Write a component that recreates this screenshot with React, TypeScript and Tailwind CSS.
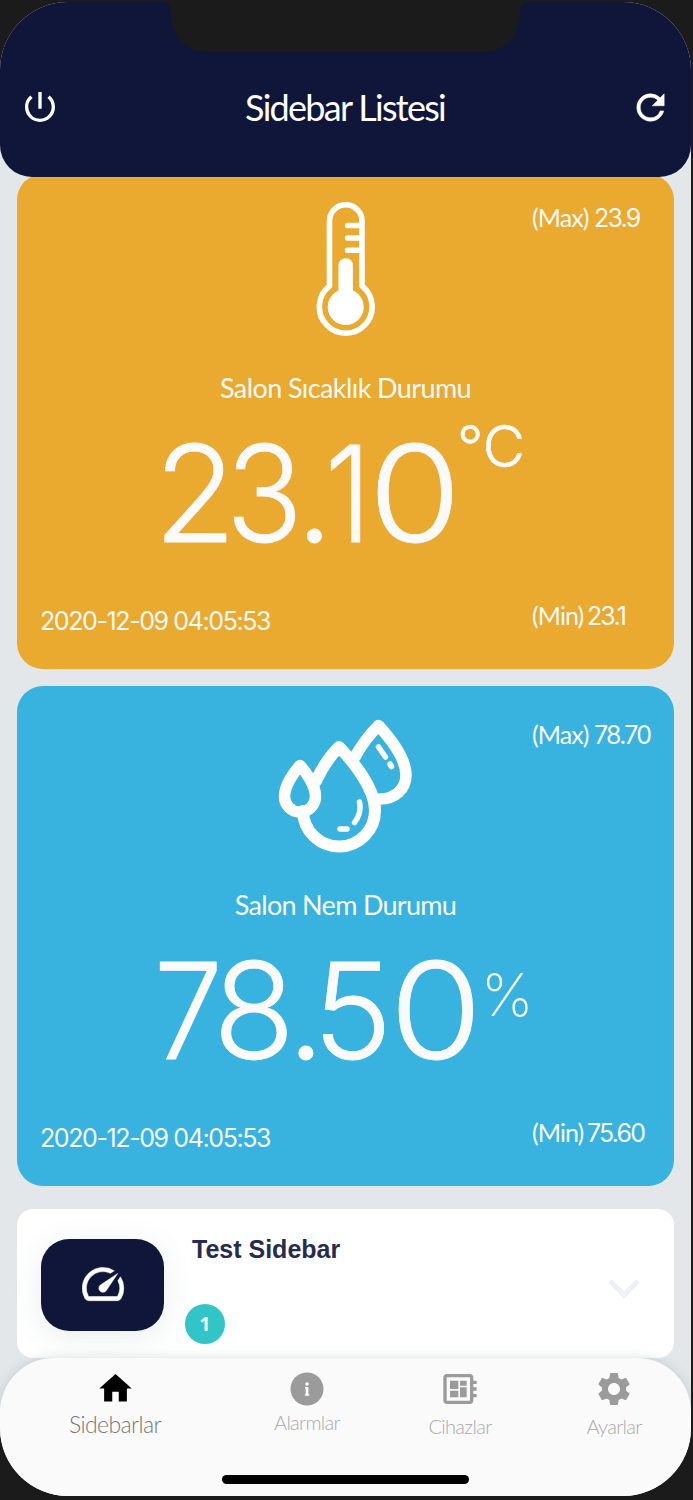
import type { ReactNode } from "react";
import { MdDeveloperBoard, MdHome, MdPowerSettingsNew, MdSettings } from "react-icons/md";

function Thermometer() {
  return (
    <svg width="60" height="136" viewBox="0 0 60 136" fill="none" stroke="#fff" strokeLinecap="round">
      <path d="M13.500 84V19a16.200 16.200 0 0 1 32.500 0V84A26.400 26.400 0 1 1 13.500 84Z" strokeWidth="5.600" strokeLinejoin="round" />
      <path d="M31.500 23.500H44M31.500 36H44M31.500 48.300H44" strokeWidth="5.400" />
      <path d="M29.700 63.500V104" strokeWidth="14.500" />
      <circle cx="29.700" cy="105" r="18" fill="#fff" stroke="none" />
    </svg>
  );
}

function Drops() {
  return (
    <svg width="136" height="134" viewBox="0 0 136 134" fill="none" stroke="#fff" strokeLinecap="round" strokeLinejoin="round">
      <path d="M77 38C84 25 92 15 100.500 6.500C111 18 128 39 128 56C128 70 117 80 102 80" strokeWidth="11.500" />
      <path d="M38 62C44 49 52 37 61 28C74 41 97 69 97 91A36 36 0 0 1 25 92" strokeWidth="12" />
      <path d="M22 46.500C15 54 6.500 67 6.500 77.500A15.500 15.500 0 0 0 37.500 77.500C37.500 67 29 54 22 46.500Z" strokeWidth="11.500" />
      <path d="M81.500 83C83 91 81 98 76.500 103.500M62 110H69M100.500 28L107.500 38M112 45L113.500 47.500" strokeWidth="5.500" />
    </svg>
  );
}

function Refresh() {
  return (
    <svg width="41" height="41" viewBox="0 0 24 24" fill="currentColor" stroke="currentColor" strokeWidth="0.3">
      <path d="M17.650 6.350A7.958 7.958 0 0 0 12 4c-4.420 0-7.990 3.580-7.990 8s3.570 8 7.990 8c3.730 0 6.840-2.550 7.730-6h-2.080A5.990 5.990 0 0 1 12 18c-3.310 0-6-2.690-6-6s2.690-6 6-6c1.660 0 3.140.690 4.220 1.780L13 11h7V4l-2.350 2.350z" />
    </svg>
  );
}

function Gauge() {
  return (
    <svg width="50" height="50" viewBox="0 0 24 24" fill="currentColor" stroke="currentColor" strokeWidth="0.25">
      <path d="m20.380 8.570-1.230 1.850a8 8 0 0 1-.220 7.580H5.070A8 8 0 0 1 15.580 6.850l1.850-1.230A10 10 0 0 0 3.350 19a2 2 0 0 0 1.720 1h13.850a2 2 0 0 0 1.740-1 10 10 0 0 0-.270-10.440zm-9.790 6.840a2 2 0 0 0 2.830 0l5.660-8.490-8.490 5.660a2 2 0 0 0 0 2.830z" />
    </svg>
  );
}

function InfoCircle() {
  return (
    <svg width="40" height="40" viewBox="0 0 40 40">
      <circle cx="20" cy="20" r="16.500" fill="#9b9b9b" />
      <path d="M18 18H21.400V25.400H22.200V26.800H17.800V25.400H18.700V19.600H18Z" fill="#fff" />
      <circle cx="20" cy="15" r="1.800" fill="#fff" />
    </svg>
  );
}

function Reading({ children }: { children: ReactNode }) {
  return (
    <span className="font-['Inter',sans-serif] tracking-[-1.8px]">{children}</span>
  );
}

type CardProps = {
  className: string;
  icon: ReactNode;
  title: ReactNode;
  value: ReactNode;
  unit: ReactNode;
  max: ReactNode;
  min: ReactNode;
};

function SensorCard({ className, icon, title, value, unit, max, min }: CardProps) {
  return (
    <section className={`flex shrink-0 flex-col justify-end rounded-[26px] pb-8 text-[#fafafa] ${className}`}>
      <div className="grid h-[200px] shrink-0 grid-cols-[142px_373px_142px] whitespace-nowrap">
        <div className="col-start-2 flex justify-center pt-[33px]">{icon}</div>
        <p className="pt-[32px] text-[25px] leading-8 tracking-[-0.9px]">{max}</p>
      </div>
      <h2 className="shrink-0 text-center text-[27px] leading-[38px]">{title}</h2>
      <div className="flex h-[182px] shrink-0 items-start whitespace-nowrap pt-[20px] font-['Inter',sans-serif] font-light leading-[132px]">
        {value}
        {unit}
      </div>
      <div className="flex h-12 shrink-0 justify-between whitespace-nowrap text-[25px] leading-8">
        <p className="pl-[23px] pt-[16px] font-['Inter',sans-serif] tracking-[-1.4px]">2020-12-09 04:05:53</p>
        <p className="w-[142px] pt-[10px] tracking-[-0.9px]">{min}</p>
      </div>
    </section>
  );
}

function Tab({ icon, label, className }: { icon: ReactNode; label: string; className: string }) {
  return (
    <button className={`flex flex-col items-center whitespace-nowrap font-light ${className}`}>
      {icon}
      <span>{label}</span>
    </button>
  );
}

export default function App() {
  return (
    <div className="h-[1500px] w-[693px] bg-[#1b1b1b] pt-[2px] font-['Lato',sans-serif]">
      <main className="flex h-[1494px] w-[691px] flex-col overflow-hidden rounded-[68px] bg-[#e3e7ea]">
        <header className="relative z-10 flex h-[175px] shrink-0 flex-col rounded-b-[32px] bg-[#10163a] text-white">
          <svg className="mx-auto block shrink-0" width="365" height="50" viewBox="0 0 365 50">
            <path d="M0 0Q8 0 8 13C9 34 22 50 46 50H319C343 50 356 34 357 13Q357 0 365 0Z" fill="#1b1b1b" />
          </svg>
          <div className="flex h-[110px] items-center justify-between pl-[20px] pr-[20px]">
            <MdPowerSettingsNew size={40} />
            <h1 className="text-[36px] font-normal tracking-[-1.7px]">Sidebar Listesi</h1>
            <Refresh />
          </div>
        </header>

        <div className="-mt-[3px] flex flex-1 flex-col gap-[17px] px-[17px]">
          <SensorCard
            className="h-[495px] bg-[#eaa92f]"
            icon={<Thermometer />}
            title={<span className="tracking-[-0.6px]">Salon Sıcaklık Durumu</span>}
            value={
              <span className="flex w-[440px] pl-[137px] text-[134px] tracking-[-8px] [-webkit-text-stroke:0.8px_#fafafa]">
                <span>2</span>
                <span className="-ml-[4px] scale-x-[0.95]">3</span>
                <span className="-ml-[2px]">.</span>
                <span className="-ml-[3px] scale-x-[0.88]">1</span>
                <span className="ml-[6px] scale-x-[1.12]">0</span>
              </span>
            }
            unit={<span className="text-[58px] leading-[38px] [-webkit-text-stroke:0.7px_#fafafa]">°C</span>}
            max={<>(Max) <Reading>23.9</Reading></>}
            min={<span className="[word-spacing:-2px]">(Min) <Reading>23.1</Reading></span>}
          />
          <SensorCard
            className="h-[500px] bg-[#38b2df]"
            icon={<Drops />}
            title={<span className="tracking-[-0.7px]">Salon Nem Durumu</span>}
            value={
              <span className="flex w-[464px] pl-[134px] text-[134px] tracking-[-8px] [-webkit-text-stroke:0.8px_#fafafa]">
                <span className="scale-x-[0.92]">7</span>
                <span className="-ml-[5px]">8</span>
                <span>.</span>
                <span className="-ml-[4px]">5</span>
                <span className="ml-[10px] scale-x-[1.12]">0</span>
              </span>
            }
            unit={<span className="pt-[21px] text-[59px] font-extralight leading-[60px]">%</span>}
            max={<>(Max) <Reading>78.70</Reading></>}
            min={<span className="[word-spacing:-2px]">(Min) <Reading>75.60</Reading></span>}
          />
          <section className="mt-[6px] flex h-[149px] shrink-0 rounded-[16px] bg-white pl-6 pt-[30px]">
            <div className="flex h-[92px] w-[123px] items-center justify-center rounded-[28px] bg-[#10163a] pb-[3px] text-white shadow-[0_6px_30px_rgba(80,110,110,0.12)]">
              <Gauge />
            </div>
            <div className="ml-[21px] flex flex-col justify-between font-['Liberation_Sans',sans-serif] font-bold">
              <h3 className="pl-[7px] text-[25px] leading-5 text-[#262b50]">Test Sidebar</h3>
              <span className="mb-[14px] flex size-[40px] items-center justify-center rounded-full bg-[#31c5c8] font-['Open_Sans',sans-serif] text-[19px] text-white">1</span>
            </div>
            <svg className="ml-auto mr-[34px] mt-[40px]" width="32" height="22" viewBox="0 0 32 22" fill="none" stroke="#edf0f4" strokeWidth="5">
              <path d="M2 2L16 16L30 2" />
            </svg>
          </section>
        </div>

        <footer className="relative z-10 flex h-[139px] shrink-0 flex-col rounded-t-[54px] bg-[#fafafa] shadow-[0_0_12px_rgba(80,110,110,0.22)]">
          <nav className="flex h-[117px] items-start text-[#aaa]">
            <Tab className="ml-[60px] w-[110px] pt-[11px] text-[23px] leading-[32px] tracking-[-0.6px] text-[#777]" icon={<MdHome size={39} className="text-black" />} label="Sidebarlar" />
            <Tab className="ml-[87px] w-[100px] pt-[11px] text-[20px] leading-[26px] tracking-[-0.7px]" icon={<InfoCircle />} label="Alarmlar" />
            <Tab className="ml-[53px] w-[100px] pt-[11px] text-[20px] leading-[35px] tracking-[-0.7px]" icon={<MdDeveloperBoard size={40} className="text-[#9b9b9b]" />} label="Cihazlar" />
            <Tab className="ml-[54px] w-[100px] pt-[11px] text-[20px] leading-[35px] tracking-[-0.7px]" icon={<MdSettings size={40} className="text-[#9b9b9b]" />} label="Ayarlar" />
          </nav>
          <div className="mx-auto h-[9px] w-[247px] rounded-full bg-black" />
        </footer>
      </main>
    </div>
  );
}
